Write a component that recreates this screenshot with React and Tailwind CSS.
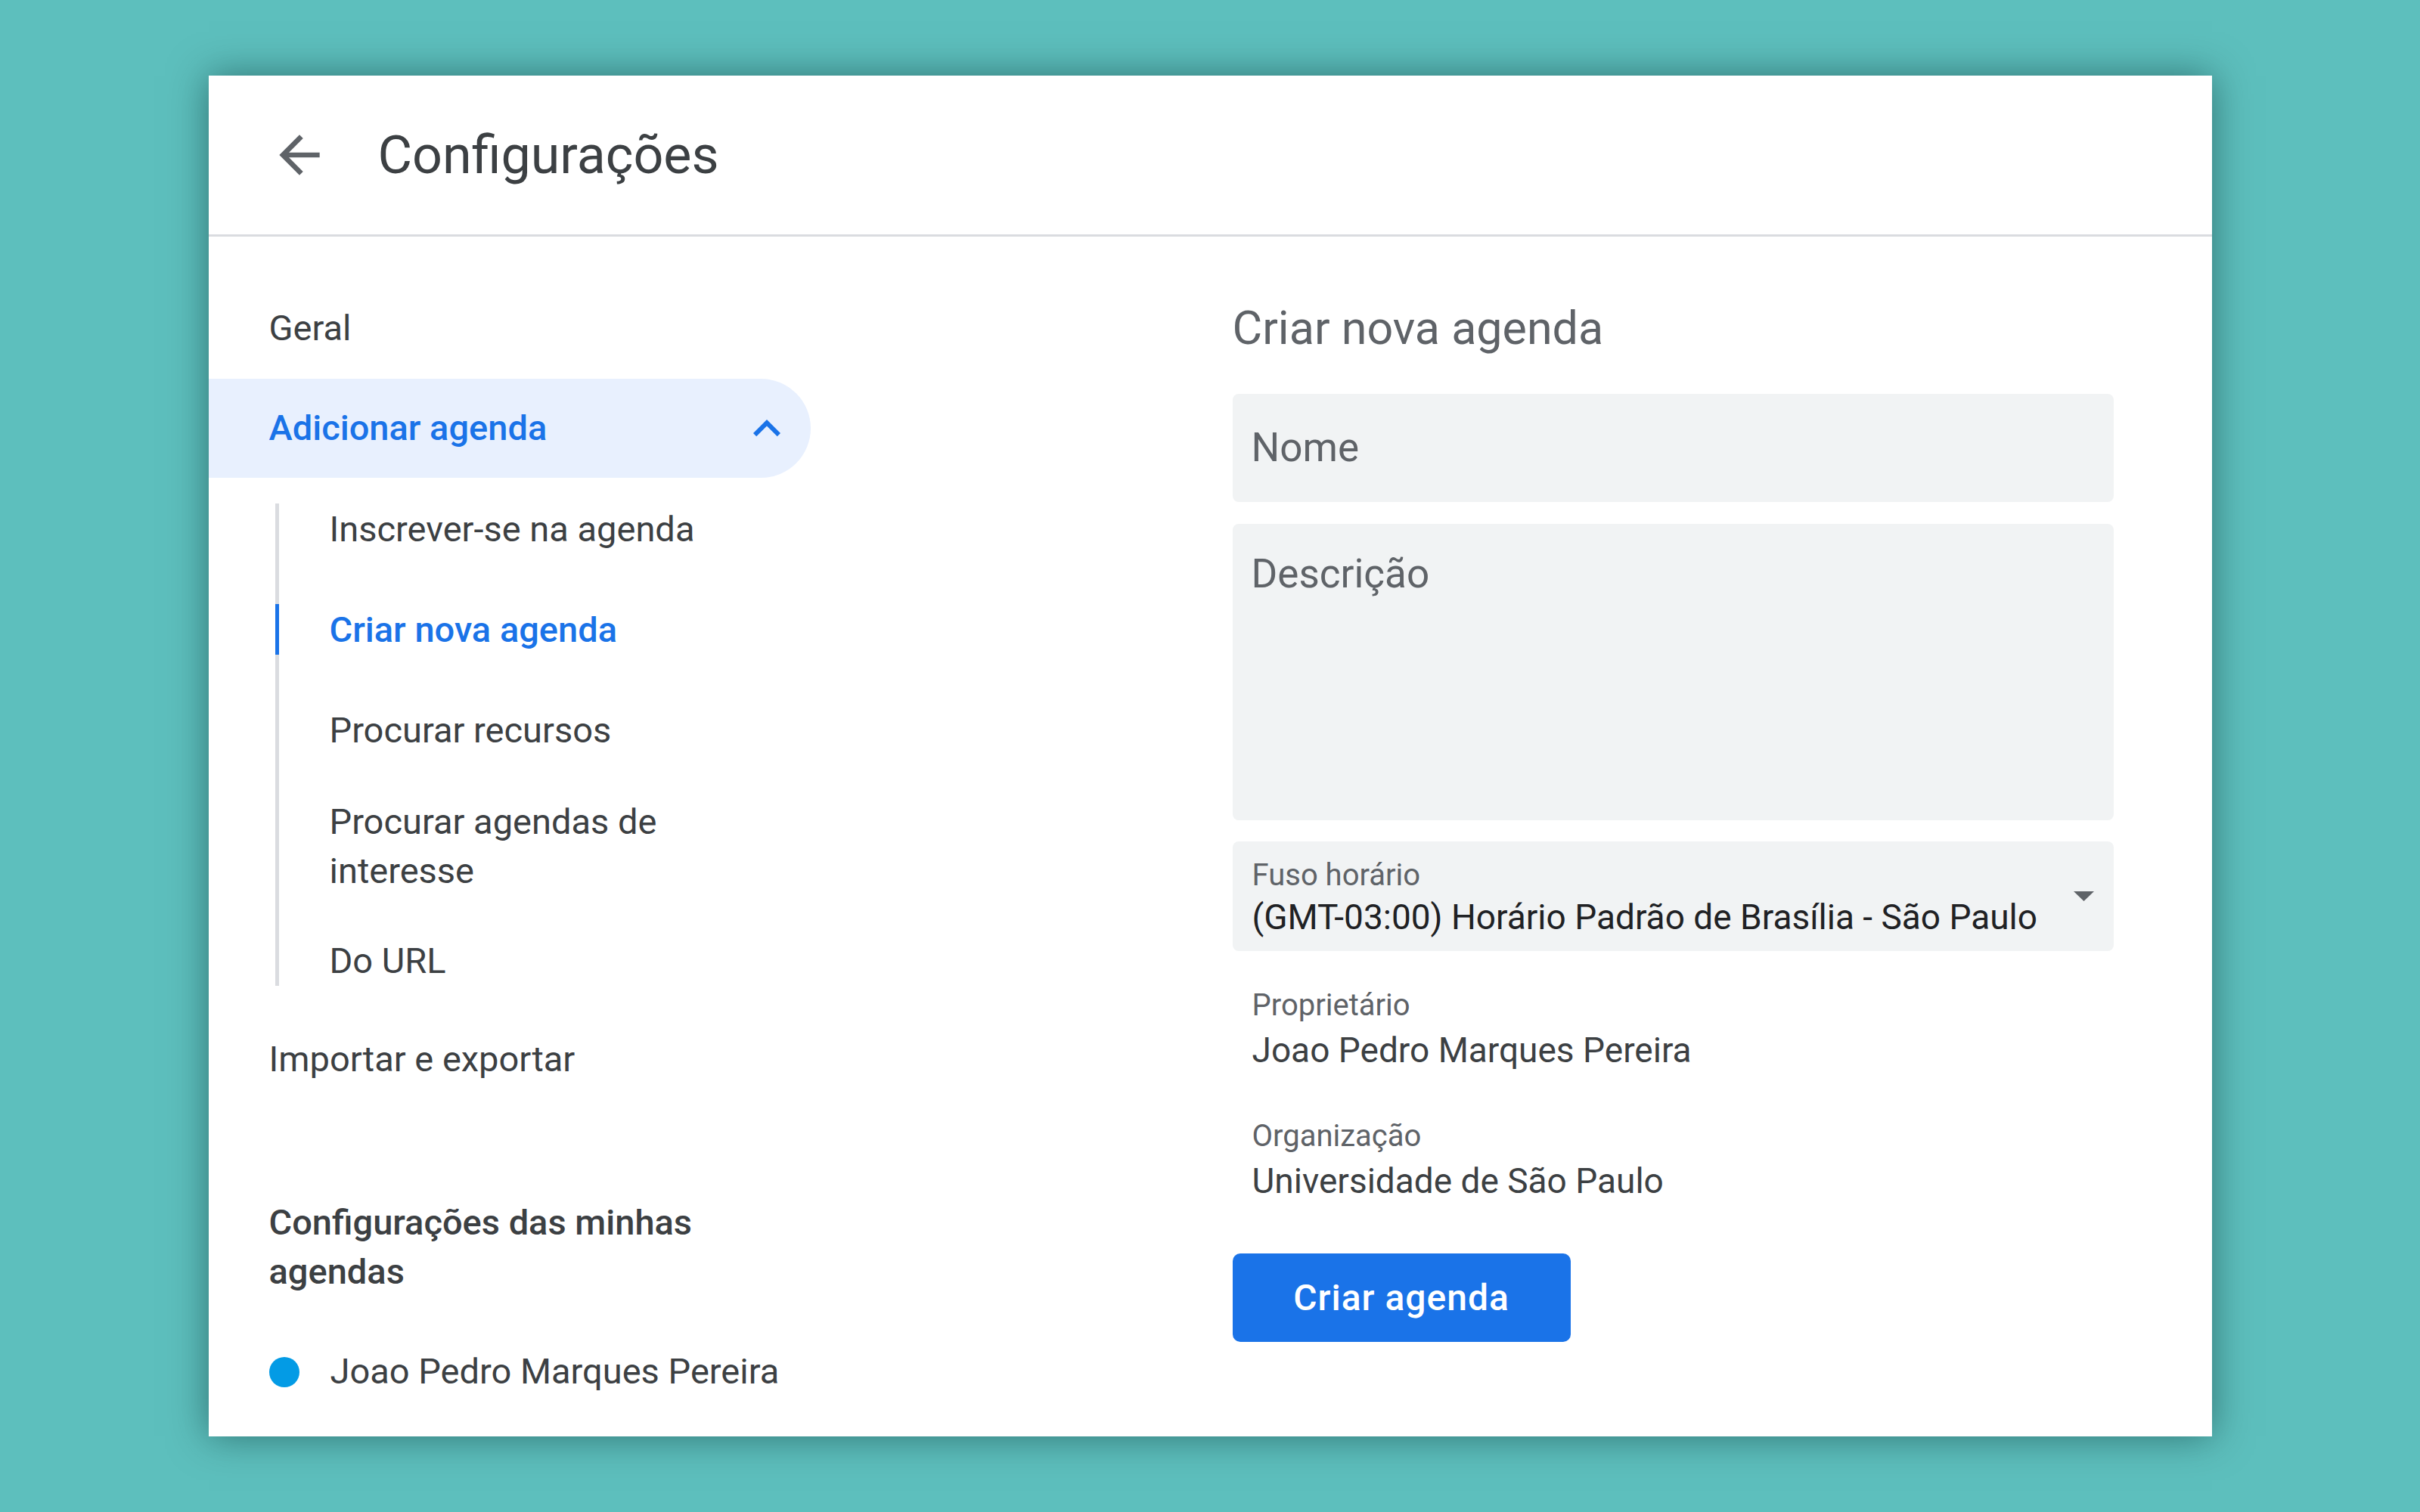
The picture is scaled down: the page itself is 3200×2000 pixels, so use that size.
import React from 'react';

const ArrowBack = () => (
  <svg viewBox="0 0 24 24" className="w-[80px] h-[80px] fill-[#5f6368]">
    <path d="M20 11H7.83l5.59-5.59L12 4l-8 8 8 8 1.41-1.41L7.83 13H20v-2z" />
  </svg>
);

const ExpandLess = () => (
  <svg viewBox="0 0 24 24" className="w-[72px] h-[72px] fill-[#1a73e8]">
    <path d="M12 8l-6 6 1.41 1.41L12 10.83l4.59 4.58L18 14z" />
  </svg>
);

const SubItem = ({ children, active, className = '' }) => (
  <div className={`relative flex items-center min-h-[67px] leading-[65px] ${active ? 'text-[#1a73e8] font-medium' : ''} ${className}`}>
    {/* blue marker sits over the grey rail */}
    {active && <span className="absolute left-[-72px] top-0 w-[5px] h-[67px] bg-[#1a73e8]" />}
    {children}
  </div>
);

const Field = ({ label, value, className = '' }) => (
  <div className={`pl-[26px] ${className}`}>
    <p className="text-[40px] leading-[48px] text-[#5f6368]">{label}</p>
    <p className="mt-[7px] text-[46px] leading-[56px] text-[#3c4043] whitespace-nowrap">{value}</p>
  </div>
);

export default function App() {
  return (
    <div className="w-[3200px] h-[2000px] bg-[#5dbfbd] flex items-center justify-center font-['Roboto','Liberation_Sans',sans-serif]">
      <div className="w-[2649px] h-[1800px] bg-white shadow-[0_0_48px_rgba(0,40,40,0.5)] flex flex-col">
        {/* header */}
        <header className="h-[213px] shrink-0 border-b-[3px] border-[#dadce0] flex items-center pl-[80px]">
          <ArrowBack />
          <h1 className="ml-[64px] text-[70px] leading-none text-[#3c4043]">Configurações</h1>
        </header>

        <div className="flex flex-1">
          {/* sidebar */}
          <nav className="w-[796px] shrink-0 pt-[88px] text-[47px] text-[#3c4043]">
            <div className="h-[67px] flex items-center pl-[80px]">Geral</div>

            <div className="mt-[33px] h-[131px] rounded-r-full bg-[#e8f0fe] flex items-center justify-between pl-[80px] pr-[22px]">
              <span className="text-[#1a73e8] font-medium">Adicionar agenda</span>
              <ExpandLess />
            </div>

            <div className="mt-[34px] ml-[88px] border-l-[5px] border-[#dadce0] pl-[67px] flex flex-col">
              <SubItem className="whitespace-nowrap">Inscrever-se na agenda</SubItem>
              <SubItem active className="mt-[66px] whitespace-nowrap">Criar nova agenda</SubItem>
              <SubItem className="mt-[66px] whitespace-nowrap">Procurar recursos</SubItem>
              <SubItem className="mt-[55px]">
                <span>Procurar agendas de<br />interesse</span>
              </SubItem>
              <SubItem className="mt-[53px]">Do URL</SubItem>
            </div>

            <div className="mt-[64px] h-[67px] flex items-center pl-[80px]">Importar e exportar</div>

            <div className="mt-[149px] pl-[80px] font-medium leading-[65px]">
              Configurações das minhas<br />agendas
            </div>

            <div className="mt-[67px] h-[67px] flex items-center pl-[80px] whitespace-nowrap">
              <span className="w-[40px] h-[40px] rounded-full bg-[#039be5] shrink-0" />
              <span className="ml-[41px]">Joao Pedro Marques Pereira</span>
            </div>
          </nav>

          {/* content */}
          <main className="ml-[558px] w-[1165px] pt-[88px]">
            <h2 className="h-[67px] flex items-center text-[61px] text-[#5f6368]">Criar nova agenda</h2>

            <div className="mt-[53px] h-[143px] rounded-[8px] bg-[#f1f3f4] flex items-center pl-[25px] text-[53px] text-[#5f6368]">
              Nome
            </div>

            <div className="mt-[29px] h-[392px] rounded-[8px] bg-[#f1f3f4] pl-[25px] pt-[33px] text-[53px] leading-[67px] text-[#5f6368]">
              Descrição
            </div>

            <div className="mt-[28px] h-[145px] rounded-[8px] bg-[#f1f3f4] flex items-center justify-between pl-[26px] pr-[26px]">
              <div className="self-start pt-[21px]">
                <p className="text-[40px] leading-[48px] text-[#5f6368]">Fuso horário</p>
                <p className="mt-[3px] text-[46px] leading-[56px] text-[#202124] whitespace-nowrap">
                  (GMT-03:00) Horário Padrão de Brasília - São Paulo
                </p>
              </div>
              <svg viewBox="0 0 27 13" className="w-[27px] h-[13px] fill-[#5f6368]">
                <path d="M0 0h27L13.5 13z" />
              </svg>
            </div>

            <Field className="mt-[48px]" label="Proprietário" value="Joao Pedro Marques Pereira" />
            <Field className="mt-[62px]" label="Organização" value="Universidade de São Paulo" />

            <button className="mt-[68px] w-[447px] h-[117px] rounded-[10px] bg-[#1a73e8] text-white text-[48px] font-medium tracking-[1px] flex items-center justify-center">
              Criar agenda
            </button>
          </main>
        </div>
      </div>
    </div>
  );
}
